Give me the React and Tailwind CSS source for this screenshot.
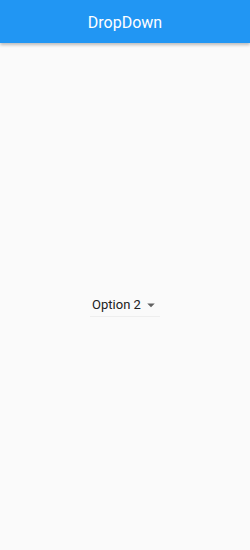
export default function App() {
  return (
    <div className="flex h-[550px] w-[250px] flex-col bg-[#fafafa]" style={{ fontFamily: 'Roboto, sans-serif' }}>
      {/* App bar */}
      <header className="flex h-[43px] shrink-0 items-center justify-center bg-[#2196f3] pt-[2px] shadow-[0_2px_3px_rgba(0,0,0,0.25)]">
        <h1 className="text-[16px] font-normal text-white">DropDown</h1>
      </header>

      {/* Body */}
      <main className="flex flex-1 items-center justify-center pt-[19px]">
        <div className="flex items-center border-b border-[#eeeeee] pb-[1px] pl-[2px]">
          <span className="text-[13px] text-[#212121]">Option 2</span>
          <svg width="18" height="18" viewBox="0 0 24 24" className="ml-[1px] fill-[#616161]">
            <path d="M7 10l5 5 5-5z" />
          </svg>
        </div>
      </main>
    </div>
  );
}
